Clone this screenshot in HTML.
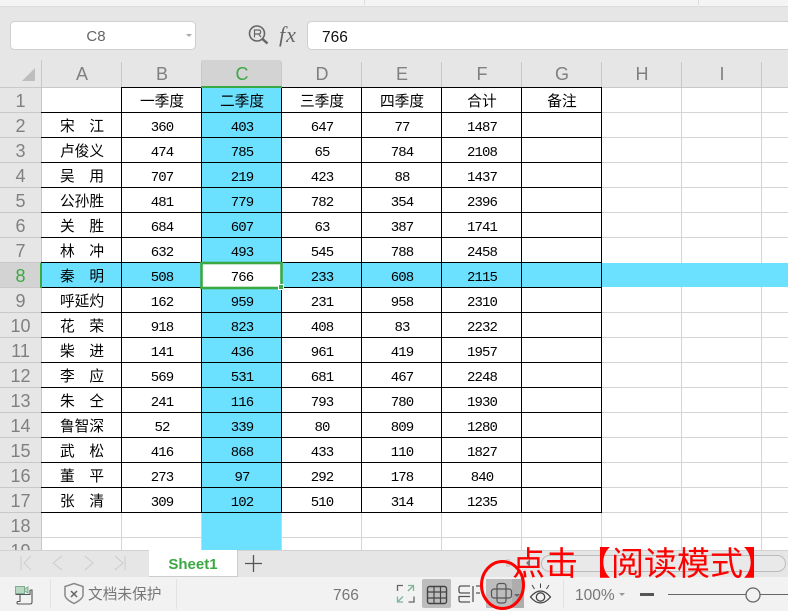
<!DOCTYPE html>
<html><head><meta charset="utf-8"><style>
html,body{margin:0;padding:0}
body{width:788px;height:611px;position:relative;overflow:hidden;background:#fff;font-family:"Liberation Sans","WenQuanYi Zen Hei",sans-serif}
.a{position:absolute}
table{position:absolute;left:42px;top:90px;border-collapse:collapse;table-layout:fixed;width:560px}
td{width:80px;height:25px;padding:2px 0 0;box-sizing:border-box;text-align:center;font-size:14.7px;line-height:23px;color:#000;font-family:"Liberation Mono","WenQuanYi Zen Hei",monospace;letter-spacing:0;white-space:nowrap}
td.n{font-size:14px;letter-spacing:-0.9px}
.h{position:absolute;top:60px;height:27px;width:80px;text-align:center;font-size:18px;line-height:28px;color:#808080}
.r{position:absolute;left:0;width:41px;height:25px;text-align:center;font-size:18px;line-height:26px;color:#808080}
</style></head><body>
<svg class="a" style="left:0;top:0" width="788" height="611" xmlns="http://www.w3.org/2000/svg">
<rect width="788" height="6" fill="#f4f4f4"/>
<rect y="6" width="788" height="54" fill="#e6e6e6"/>
<rect y="6" width="788" height="1" fill="#dcdcdc"/>
<rect x="364" width="1" height="5" fill="#ddd"/><rect x="698" width="1" height="5" fill="#ddd"/>
<rect x="10.5" y="21.5" width="185" height="28" rx="4" fill="#fff" stroke="#cfcfcf"/>
<path d="M186 34h6l-3 3z" fill="#aaa"/>
<rect x="307.500" y="21.500" width="490" height="28" rx="4" fill="#fff" stroke="#cfcfcf"/>
<circle cx="257" cy="33.500" r="7.500" fill="none" stroke="#666" stroke-width="1.600"/>
<path d="M262.500 39l5 4.500" stroke="#666" stroke-width="2.500"/>
<path d="M254.500 37.500v-7.500h4q2.200 0 2.200 2t-2.200 2h-4M258.500 34l2.500 3" stroke="#666" stroke-width="1.200" fill="none"/>
<rect y="60" width="788" height="27" fill="#e6e6e6"/>
<rect x="201" y="60" width="80" height="27" fill="#d3d3d3"/>
<path d="M35 68v13H22z" fill="#bdbdbd"/>
<rect y="87" width="41" height="463" fill="#e6e6e6"/>
<rect y="263" width="41" height="25" fill="#d3d3d3"/>
<rect x="0" y="87" width="788" height="1" fill="#c8c8c8"/>
<g fill="#d4d4d4">
<rect x="681" y="88" width="1" height="462"/><rect x="761" y="88" width="1" height="462"/><rect x="601" y="512" width="1" height="38"/><rect x="521" y="512" width="1" height="38"/><rect x="441" y="512" width="1" height="38"/><rect x="361" y="512" width="1" height="38"/><rect x="281" y="512" width="1" height="38"/><rect x="201" y="512" width="1" height="38"/><rect x="121" y="512" width="1" height="38"/>
<rect x="602" y="112" width="186" height="1"/><rect x="602" y="137" width="186" height="1"/><rect x="602" y="162" width="186" height="1"/><rect x="602" y="187" width="186" height="1"/><rect x="602" y="212" width="186" height="1"/><rect x="602" y="237" width="186" height="1"/><rect x="602" y="312" width="186" height="1"/><rect x="602" y="337" width="186" height="1"/><rect x="602" y="362" width="186" height="1"/><rect x="602" y="387" width="186" height="1"/><rect x="602" y="412" width="186" height="1"/><rect x="602" y="437" width="186" height="1"/><rect x="602" y="462" width="186" height="1"/><rect x="602" y="487" width="186" height="1"/><rect x="602" y="512" width="186" height="1"/>
<rect x="41" y="537" width="747" height="1"/>
</g>
<rect x="202" y="87" width="79" height="463" fill="#6be0ff"/>
<rect x="42" y="263" width="746" height="24" fill="#6be0ff"/>
<g fill="#c8c8c8">
<rect x="41" y="60" width="1" height="490"/>
<rect x="121" y="62" width="1" height="25"/><rect x="201" y="62" width="1" height="25"/><rect x="281" y="62" width="1" height="25"/><rect x="361" y="62" width="1" height="25"/><rect x="441" y="62" width="1" height="25"/><rect x="521" y="62" width="1" height="25"/><rect x="601" y="62" width="1" height="25"/><rect x="681" y="62" width="1" height="25"/><rect x="761" y="62" width="1" height="25"/>
<rect y="112" width="41" height="1"/><rect y="137" width="41" height="1"/><rect y="162" width="41" height="1"/><rect y="187" width="41" height="1"/><rect y="212" width="41" height="1"/><rect y="237" width="41" height="1"/><rect y="262" width="41" height="1"/><rect y="287" width="41" height="1"/><rect y="312" width="41" height="1"/><rect y="337" width="41" height="1"/><rect y="362" width="41" height="1"/><rect y="387" width="41" height="1"/><rect y="412" width="41" height="1"/><rect y="437" width="41" height="1"/><rect y="462" width="41" height="1"/><rect y="487" width="41" height="1"/><rect y="512" width="41" height="1"/><rect y="537" width="41" height="1"/>
</g>
<g fill="#000">
<rect x="41" y="112" width="561" height="1"/><rect x="41" y="137" width="561" height="1"/><rect x="41" y="162" width="561" height="1"/><rect x="41" y="187" width="561" height="1"/><rect x="41" y="212" width="561" height="1"/><rect x="41" y="237" width="561" height="1"/><rect x="41" y="262" width="561" height="1"/><rect x="41" y="287" width="561" height="1"/><rect x="41" y="312" width="561" height="1"/><rect x="41" y="337" width="561" height="1"/><rect x="41" y="362" width="561" height="1"/><rect x="41" y="387" width="561" height="1"/><rect x="41" y="412" width="561" height="1"/><rect x="41" y="437" width="561" height="1"/><rect x="41" y="462" width="561" height="1"/><rect x="41" y="487" width="561" height="1"/><rect x="41" y="512" width="561" height="1"/>
<rect x="121" y="87" width="1" height="426"/><rect x="201" y="87" width="1" height="426"/><rect x="281" y="87" width="1" height="426"/><rect x="361" y="87" width="1" height="426"/><rect x="441" y="87" width="1" height="426"/><rect x="521" y="87" width="1" height="426"/><rect x="601" y="87" width="1" height="426"/>
<rect x="121" y="87" width="481" height="1"/>
</g>
<rect x="201" y="86" width="81" height="2" fill="#3ca844"/>
<rect x="40" y="263" width="2" height="25" fill="#3ca844"/>
<rect x="201.500" y="263" width="80" height="25" fill="#fff" stroke="#3ca844" stroke-width="2.600"/>
<rect x="278.500" y="284.500" width="5" height="5" fill="#3ca844" stroke="#fff"/>
<rect y="550" width="788" height="27" fill="#e6e6e6"/>
<rect y="550" width="788" height="1" fill="#d2d2d2"/>
<rect x="149" y="550" width="88" height="26" fill="#fff"/>
<path d="M237.500 550v26.500H149" stroke="#ccc" fill="none"/>
<path d="M21 556v14M31 556l-7 7 7 7M62 556l-9 7 9 7M85 556l8 7-8 7M115 556l8 7-8 7M125 556v14" stroke="#d0d0d0" fill="none" stroke-width="1.200"/>
<path d="M253.500 555v17M245 563.500h17" stroke="#555" stroke-width="1.300"/>
<rect x="541.500" y="555.500" width="244" height="16" rx="8" fill="#e9e9e9" stroke="#bbb"/>
<path d="M507 559v8M509 559v8" stroke="#bbb"/>
<path d="M530 559l-4 4 4 4z" fill="#777"/>
<rect y="577" width="788" height="34" fill="#f2f2f2"/>
<rect x="50" y="579" width="1" height="30" fill="#e2e2e2"/><rect x="176" y="579" width="1" height="30" fill="#e2e2e2"/><rect x="563" y="580" width="1" height="28" fill="#e2e2e2"/>
<path d="M15.500 586.500h9v7h-9zM24.500 589l3.500-2v6l-3.500-2" fill="#b9d8c4" stroke="#7fae93"/>
<path d="M15.500 594.500h15M20 595v6.500h-2q-1 0-1 1.200t1 1.300h12q2 0 2-2v-12h-2M30 590v5" stroke="#555" fill="none" stroke-width="1.100"/>
<path d="M74 583.500l9 3v8.500q0 4-9 8.500q-9-4.500-9-8.500v-8.500z" fill="none" stroke="#888" stroke-width="1.500"/>
<path d="M71 591l6 6M77 591l-6 6" stroke="#666" stroke-width="1.500"/>
<path d="M397.500 591v-5.500h5.500M414 596.500v5.500h-5.500" stroke="#666" fill="none" stroke-width="1.300"/>
<path d="M408 585.500h5.500v5.500M413.500 585.500l-5.500 5.500M403 602h-5.500v-5.500M397.500 602l5.500-5.500" stroke="#7fb596" fill="none" stroke-width="1.300"/>
<rect x="422" y="579" width="29" height="29" rx="2" fill="#bdbdbd"/>
<rect x="427.500" y="586.500" width="19" height="17" rx="2" fill="none" stroke="#444" stroke-width="1.400"/>
<path d="M434 586v17M440.500 586v17M427 592h19M427 598h19" stroke="#444" stroke-width="1.200"/>
<path d="M470 586h-9q-2 0-2 2v3q0 2 2 2h9M470 596.500h-11v3.500q0 2 2 2h9M473 586v16M476 586h4M476 593h4" stroke="#555" fill="none" stroke-width="1.300"/>
<rect x="486" y="579" width="26" height="29" fill="#bdbdbd"/><rect x="512" y="579" width="12" height="29" fill="#adadad"/>
<rect x="497" y="583.500" width="9" height="19.500" rx="2.500" fill="none" stroke="#555" stroke-width="1.200"/>
<rect x="491.500" y="589" width="20" height="9" rx="2.500" fill="none" stroke="#555" stroke-width="1.200"/>
<path d="M514 594h6l-3 3z" fill="#666"/>
<path d="M530.500 597q10-12 20 0q-10 12-20 0z" fill="none" stroke="#444" stroke-width="1.300"/>
<circle cx="540.500" cy="597" r="4.200" fill="none" stroke="#444" stroke-width="1.300"/>
<path d="M532 585l2.500 4M540.500 583.500v4.500M549 585l-2.500 4" stroke="#444"/>
<path d="M619 593h6l-3 3z" fill="#999"/>
<rect x="640" y="593" width="14" height="3" fill="#555"/>
<rect x="668" y="594" width="120" height="1" fill="#666"/>
<circle cx="753" cy="595" r="7" fill="#f2f2f2" stroke="#666" stroke-width="1.300"/>
<ellipse cx="502.500" cy="585" rx="21" ry="23.500" fill="none" stroke="#f00" stroke-width="3"/>
</svg>
<div class="a" style="left:10px;top:22px;width:172px;height:28px;text-align:center;font-size:15px;line-height:30px;color:#666">C8</div>
<div class="a" style="left:279px;top:21px;font:italic 22px/28px 'Liberation Serif',serif;color:#666;letter-spacing:1px">fx</div>
<div class="a" style="left:322px;top:24px;font-size:15.500px;line-height:28px;color:#111">766</div>
<div class="h" style="left:42px">A</div><div class="h" style="left:122px">B</div><div class="h" style="left:202px;color:#3ca844">C</div><div class="h" style="left:282px">D</div><div class="h" style="left:362px">E</div><div class="h" style="left:442px">F</div><div class="h" style="left:522px">G</div><div class="h" style="left:602px">H</div><div class="h" style="left:682px">I</div>
<div class="r" style="top:88px">1</div><div class="r" style="top:113px">2</div><div class="r" style="top:138px">3</div><div class="r" style="top:163px">4</div><div class="r" style="top:188px">5</div><div class="r" style="top:213px">6</div><div class="r" style="top:238px">7</div><div class="r" style="top:263px;color:#3ca844">8</div><div class="r" style="top:288px">9</div><div class="r" style="top:313px">10</div><div class="r" style="top:338px">11</div><div class="r" style="top:363px">12</div><div class="r" style="top:388px">13</div><div class="r" style="top:413px">14</div><div class="r" style="top:438px">15</div><div class="r" style="top:463px">16</div><div class="r" style="top:488px">17</div><div class="r" style="top:513px">18</div>
<div class="a" style="left:0;top:538px;width:41px;height:12px;overflow:hidden;text-align:center;font-size:18px;line-height:26px;color:#808080">19</div>
<table>
<tr><td></td><td>一季度</td><td>二季度</td><td>三季度</td><td>四季度</td><td>合计</td><td>备注</td></tr>
<tr><td>宋　江</td><td class="n">360</td><td class="n">403</td><td class="n">647</td><td class="n">77</td><td class="n">1487</td><td></td></tr>
<tr><td>卢俊义</td><td class="n">474</td><td class="n">785</td><td class="n">65</td><td class="n">784</td><td class="n">2108</td><td></td></tr>
<tr><td>吴　用</td><td class="n">707</td><td class="n">219</td><td class="n">423</td><td class="n">88</td><td class="n">1437</td><td></td></tr>
<tr><td>公孙胜</td><td class="n">481</td><td class="n">779</td><td class="n">782</td><td class="n">354</td><td class="n">2396</td><td></td></tr>
<tr><td>关　胜</td><td class="n">684</td><td class="n">607</td><td class="n">63</td><td class="n">387</td><td class="n">1741</td><td></td></tr>
<tr><td>林　冲</td><td class="n">632</td><td class="n">493</td><td class="n">545</td><td class="n">788</td><td class="n">2458</td><td></td></tr>
<tr><td>秦　明</td><td class="n">508</td><td class="n">766</td><td class="n">233</td><td class="n">608</td><td class="n">2115</td><td></td></tr>
<tr><td>呼延灼</td><td class="n">162</td><td class="n">959</td><td class="n">231</td><td class="n">958</td><td class="n">2310</td><td></td></tr>
<tr><td>花　荣</td><td class="n">918</td><td class="n">823</td><td class="n">408</td><td class="n">83</td><td class="n">2232</td><td></td></tr>
<tr><td>柴　进</td><td class="n">141</td><td class="n">436</td><td class="n">961</td><td class="n">419</td><td class="n">1957</td><td></td></tr>
<tr><td>李　应</td><td class="n">569</td><td class="n">531</td><td class="n">681</td><td class="n">467</td><td class="n">2248</td><td></td></tr>
<tr><td>朱　仝</td><td class="n">241</td><td class="n">116</td><td class="n">793</td><td class="n">780</td><td class="n">1930</td><td></td></tr>
<tr><td>鲁智深</td><td class="n">52</td><td class="n">339</td><td class="n">80</td><td class="n">809</td><td class="n">1280</td><td></td></tr>
<tr><td>武　松</td><td class="n">416</td><td class="n">868</td><td class="n">433</td><td class="n">110</td><td class="n">1827</td><td></td></tr>
<tr><td>董　平</td><td class="n">273</td><td class="n">97</td><td class="n">292</td><td class="n">178</td><td class="n">840</td><td></td></tr>
<tr><td>张　清</td><td class="n">309</td><td class="n">102</td><td class="n">510</td><td class="n">314</td><td class="n">1235</td><td></td></tr>
</table>
<div class="a" style="left:149px;top:551px;width:88px;text-align:center;font-size:15px;font-weight:bold;line-height:27px;color:#3ca844">Sheet1</div>
<div class="a" style="left:88px;top:580px;font-size:14.700px;line-height:30px;color:#777;white-space:nowrap">文档未保护</div>
<div class="a" style="left:333px;top:580px;font-size:15.500px;line-height:31px;color:#777">766</div>
<div class="a" style="left:575px;top:580px;font-size:15.500px;line-height:31px;color:#777">100%</div>
<div class="a" style="left:512px;top:545px;font-size:33px;line-height:38px;color:#f00;white-space:nowrap">点击【阅读模式】</div>
</body></html>
